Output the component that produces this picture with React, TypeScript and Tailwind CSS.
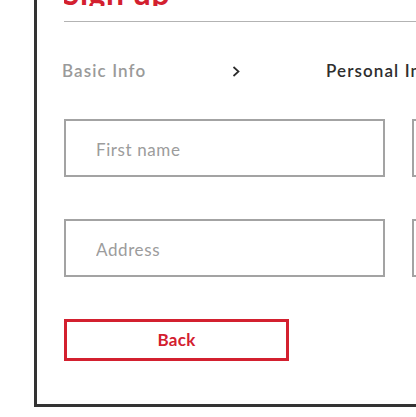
import React from 'react';

const font = { fontFamily: 'Lato, "Open Sans", sans-serif' };

function Chevron() {
  return (
    <svg width="8" height="11" viewBox="0 0 8 11" fill="none">
      <polyline points="1.5,1 6.5,5.5 1.5,10" stroke="#2b2b2b" strokeWidth="1.7" />
    </svg>
  );
}

function Field({ placeholder }: { placeholder: string }) {
  return (
    <input
      className="w-[321px] h-[58px] border-2 border-[#a3a3a3] bg-white px-[30px] pt-[2px] text-[17px] tracking-[0.6px] text-[#333] placeholder:text-[#9c9c9c] outline-none"
      placeholder={placeholder}
      type="text"
    />
  );
}

function App() {
  return (
    <div className="w-[416px] h-[417px] bg-white overflow-hidden" style={font}>
      <div className="ml-[34px] w-[800px] border-l-[3px] border-b-[3px] border-[#333] pl-[27px] pb-[43px]">
        <div className="h-[6px] overflow-hidden flex items-end">
          <h1 className="text-[32px] font-bold leading-[0.8] tracking-[0.5px] text-[#d3202f] -ml-[2px]">Sign up</h1>
        </div>
        <div className="mt-[15px] h-px bg-[#b3b3b3]" />

        <div className="mt-[39px] h-[20px] flex items-center text-[17px] font-semibold leading-[20px] tracking-[1.1px]">
          <span className="w-[168px] -ml-[2px] text-[#9a9a9a]">Basic Info</span>
          <span className="w-[96px] pl-[2px] flex items-center">
            <Chevron />
          </span>
          <span className="text-[#2e2e2e]">Personal Info</span>
        </div>

        <div className="mt-[38px] grid grid-cols-[321px_321px] gap-x-[27px] gap-y-[42px]">
          <Field placeholder="First name" />
          <Field placeholder="Last name" />
          <Field placeholder="Address" />
          <Field placeholder="Phone" />
        </div>

        <button
          className="mt-[42px] w-[225px] h-[42px] border-[3px] border-[#d3202f] bg-white text-[17px] font-bold tracking-[0.3px] text-[#d3202f]"
          type="button"
        >
          Back
        </button>
      </div>
    </div>
  );
}

export default App;
